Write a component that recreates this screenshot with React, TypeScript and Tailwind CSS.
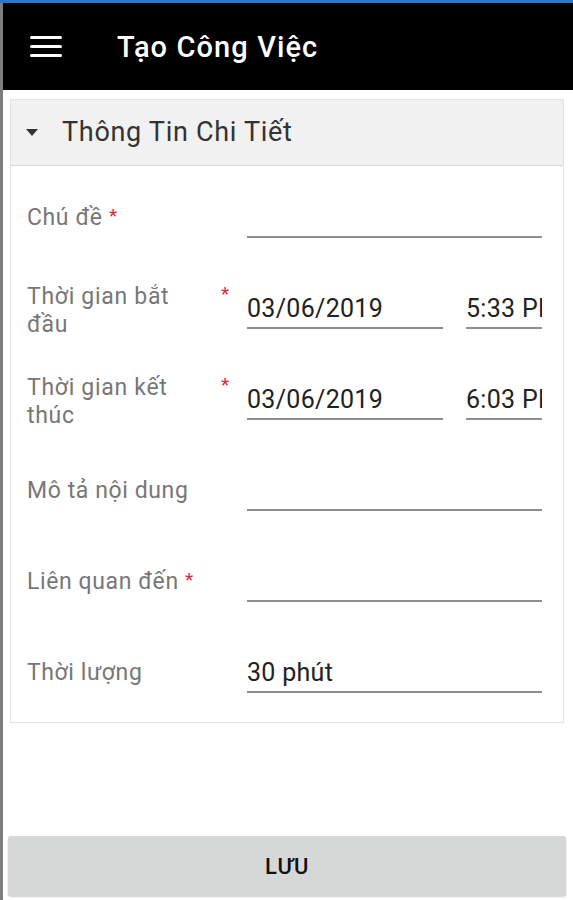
import React from "react";

const font = { fontFamily: "Roboto, 'Noto Sans', sans-serif" };

function Field({ value, w }: { value?: string; w: string }) {
  return (
    <div className={`${w} h-[40px] border-b-2 border-[#8e8e8e] overflow-hidden whitespace-nowrap text-[25px] tracking-[0.3px] leading-[40px] text-[#222]`}>
      {value}
    </div>
  );
}

function Star() {
  return <span className="text-[#e0263a] text-[19px] relative -top-[3px]">*</span>;
}

export default function App() {
  return (
    <div className="w-[573px] h-[900px] bg-white flex flex-col overflow-hidden" style={font}>
      <div className="h-[3px] bg-[#2a78cf]" />
      <div className="flex flex-1 flex-col border-l-[3px] border-[#7d7d7d]">
        <div className="h-[87px] bg-black flex items-center">
          <div className="ml-[27px] w-[32px] flex flex-col gap-[6px]">
            <div className="h-[3px] bg-white rounded-full" />
            <div className="h-[3px] bg-white rounded-full" />
            <div className="h-[3px] bg-white rounded-full" />
          </div>
          <div className="ml-[55px] mt-[3px] text-white text-[29px] font-medium tracking-[1.1px]">Tạo Công Việc</div>
        </div>

        <div className="mt-[9px] ml-[7px] w-[554px] border border-[#e2e2e2] flex flex-col">
          <div className="h-[66px] bg-[#f1f1f1] border-b border-[#d9d9d9] flex items-center">
            <svg width="12" height="7" viewBox="0 0 12 7" className="ml-[15px]">
              <polygon points="0,0 12,0 6,7" fill="#333" />
            </svg>
            <div className="ml-[24px] text-[27px] tracking-[0.7px] text-[#333]">Thông Tin Chi Tiết</div>
          </div>

          <div className="pl-[16px] pr-[21px] pt-[32px] pb-[29px] flex flex-col gap-[51px]">
            <div className="flex">
              <div className="w-[220px] h-[40px] text-[23px] tracking-[0.6px] leading-[40px] text-[#777] whitespace-nowrap">
                Chú đề <Star />
              </div>
              <Field w="flex-1" />
            </div>

            <div className="flex">
              <div className="w-[220px] h-[40px] relative">
                <div className="absolute left-0 -top-[6px] w-[175px] text-[23px] tracking-[0.7px] leading-[28px] text-[#777]">Thời gian bắt đầu</div>
                <span className="absolute left-[194px] -top-[9px] text-[#e0263a] text-[19px]">*</span>
              </div>
              <Field w="w-[196px]" value="03/06/2019" />
              <div className="w-[23px]" />
              <Field w="flex-1" value="5:33 PM" />
            </div>

            <div className="flex">
              <div className="w-[220px] h-[40px] relative">
                <div className="absolute left-0 -top-[6px] w-[175px] text-[23px] tracking-[0.7px] leading-[28px] text-[#777]">Thời gian kết thúc</div>
                <span className="absolute left-[194px] -top-[9px] text-[#e0263a] text-[19px]">*</span>
              </div>
              <Field w="w-[196px]" value="03/06/2019" />
              <div className="w-[23px]" />
              <Field w="flex-1" value="6:03 PM" />
            </div>

            <div className="flex">
              <div className="w-[220px] h-[40px] text-[23px] tracking-[0.6px] leading-[40px] text-[#777] whitespace-nowrap">Mô tả nội dung</div>
              <Field w="flex-1" />
            </div>

            <div className="flex">
              <div className="w-[220px] h-[40px] text-[23px] tracking-[0.6px] leading-[40px] text-[#777] whitespace-nowrap">
                Liên quan đến <Star />
              </div>
              <Field w="flex-1" />
            </div>

            <div className="flex">
              <div className="w-[220px] h-[40px] text-[23px] tracking-[0.6px] leading-[40px] text-[#777] whitespace-nowrap">Thời lượng</div>
              <Field w="flex-1" value="30 phút" />
            </div>
          </div>
        </div>

        <div className="flex-1" />
        <div className="mb-[4px] ml-[5px] w-[558px] h-[60px] rounded-[3px] bg-[#d6d7d7] shadow-[0_1px_2px_rgba(0,0,0,0.2)] flex items-center justify-center text-[22px] tracking-[0.8px] font-medium text-[#111]">
          LƯU
        </div>
      </div>
    </div>
  );
}
